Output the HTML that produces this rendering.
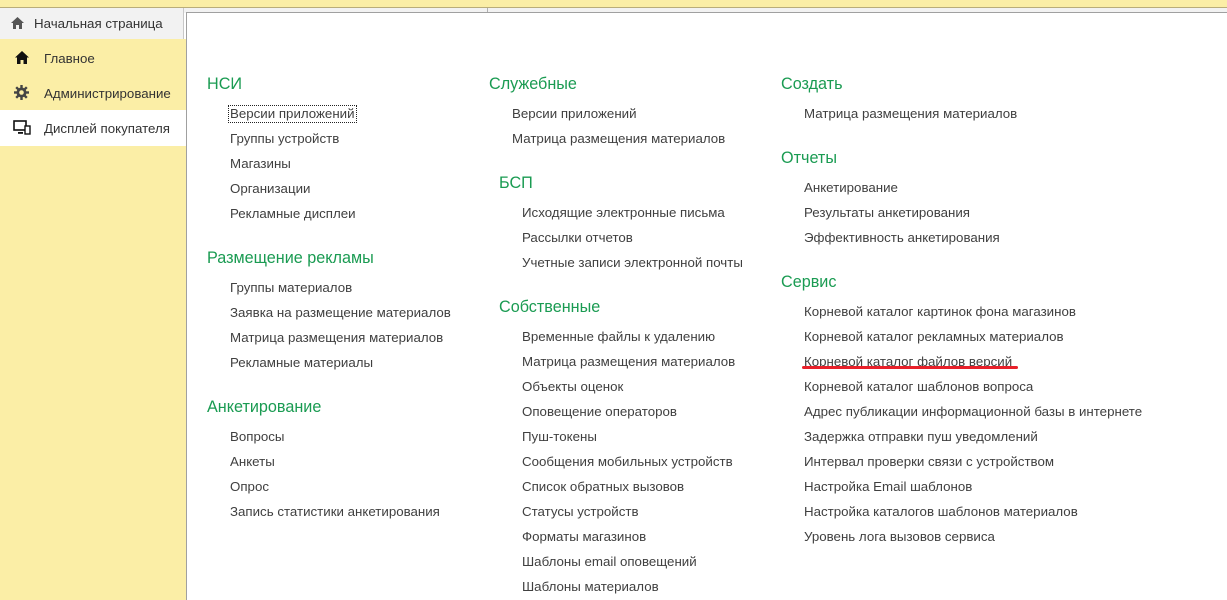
<!DOCTYPE html>
<html><head><meta charset="utf-8"><style>
*{margin:0;padding:0;box-sizing:border-box}
body{width:1227px;height:600px;overflow:hidden;position:relative;background:#fff;font-family:"Liberation Sans",Arial,sans-serif;font-size:13.3px;color:#404040}
.a{position:absolute;white-space:nowrap;line-height:16px;margin-top:1px}
.h{position:absolute;white-space:nowrap;font-size:16.2px;line-height:18px;color:#1a9b52;margin-top:1px}
</style></head><body>
<div style="position:absolute;left:0;top:0;width:1227px;height:8px;background:#fbeea6;border-bottom:1px solid #b9ad7a"></div>
<div style="position:absolute;left:0;top:8px;width:1227px;height:5px;background:#f2f2f2"></div>
<div style="position:absolute;left:487px;top:8px;width:1px;height:5px;background:#b0b0b0"></div>
<div style="position:absolute;left:0;top:8px;width:184px;height:31px;background:#f2f2f2;border-right:1px solid #c8c8c8"></div>
<svg style="position:absolute;left:10px;top:16px" width="15" height="14" viewBox="0 0 15 14"><path d="M7.5 1 L14 7 H12 V13 H9 V9 H6 V13 H3 V7 H1 Z" fill="#555"/></svg>
<div class="a" style="left:34px;top:15px;color:#333">Начальная страница</div>
<div style="position:absolute;left:0;top:39px;width:186px;height:561px;background:#fbeea6"></div>
<div style="position:absolute;left:0;top:110px;width:186px;height:36px;background:#fff"></div>
<svg style="position:absolute;left:15px;top:51px" width="14" height="13" viewBox="0 0 14 13"><path d="M7 0 L14 6.5 H12 V13 H8.5 V9 H5.5 V13 H2 V6.5 H0 Z" fill="#111"/></svg>
<div class="a" style="left:44px;top:50px;color:#333">Главное</div>
<svg style="position:absolute;left:14px;top:85px" width="15" height="15" viewBox="0 0 15 15"><g fill="#444"><circle cx="7.5" cy="7.5" r="5"/><rect x="6.3" y="0" width="2.4" height="15"/><rect x="0" y="6.3" width="15" height="2.4"/><rect x="6.3" y="0" width="2.4" height="15" transform="rotate(45 7.5 7.5)"/><rect x="6.3" y="0" width="2.4" height="15" transform="rotate(-45 7.5 7.5)"/></g><circle cx="7.5" cy="7.5" r="2.3" fill="#fbeea6"/></svg>
<div class="a" style="left:44px;top:85px;color:#333">Администрирование</div>
<svg style="position:absolute;left:13px;top:120px" width="18" height="15" viewBox="0 0 18 15"><rect x="1" y="1" width="12" height="9" fill="none" stroke="#111" stroke-width="1.6"/><rect x="5" y="12" width="5" height="1.8" fill="#111"/><rect x="12" y="6" width="5" height="8" fill="#fff" stroke="#111" stroke-width="1.4"/></svg>
<div class="a" style="left:44px;top:120px;color:#333">Дисплей покупателя</div>
<div style="position:absolute;left:186px;top:12px;width:1041px;height:588px;background:#fff;border-left:1px solid #a0a0a0;border-top:1px solid #a0a0a0"></div>

<div class="h" style="left:207px;top:74px">НСИ</div>
<div class="a" style="left:229px;top:105px;outline:1px dotted #222;padding:0 1px 0 1px">Версии приложений</div>
<div class="a" style="left:230px;top:130px">Группы устройств</div>
<div class="a" style="left:230px;top:155px">Магазины</div>
<div class="a" style="left:230px;top:180px">Организации</div>
<div class="a" style="left:230px;top:205px">Рекламные дисплеи</div>
<div class="h" style="left:207px;top:248px">Размещение рекламы</div>
<div class="a" style="left:230px;top:279px">Группы материалов</div>
<div class="a" style="left:230px;top:304px">Заявка на размещение материалов</div>
<div class="a" style="left:230px;top:329px">Матрица размещения материалов</div>
<div class="a" style="left:230px;top:354px">Рекламные материалы</div>
<div class="h" style="left:207px;top:397px">Анкетирование</div>
<div class="a" style="left:230px;top:428px">Вопросы</div>
<div class="a" style="left:230px;top:453px">Анкеты</div>
<div class="a" style="left:230px;top:478px">Опрос</div>
<div class="a" style="left:230px;top:503px">Запись статистики анкетирования</div>

<div class="h" style="left:489px;top:74px">Служебные</div>
<div class="a" style="left:512px;top:105px">Версии приложений</div>
<div class="a" style="left:512px;top:130px">Матрица размещения материалов</div>
<div class="h" style="left:499px;top:173px">БСП</div>
<div class="a" style="left:522px;top:204px">Исходящие электронные письма</div>
<div class="a" style="left:522px;top:229px">Рассылки отчетов</div>
<div class="a" style="left:522px;top:254px">Учетные записи электронной почты</div>
<div class="h" style="left:499px;top:297px">Собственные</div>
<div class="a" style="left:522px;top:328px">Временные файлы к удалению</div>
<div class="a" style="left:522px;top:353px">Матрица размещения материалов</div>
<div class="a" style="left:522px;top:378px">Объекты оценок</div>
<div class="a" style="left:522px;top:403px">Оповещение операторов</div>
<div class="a" style="left:522px;top:428px">Пуш-токены</div>
<div class="a" style="left:522px;top:453px">Сообщения мобильных устройств</div>
<div class="a" style="left:522px;top:478px">Список обратных вызовов</div>
<div class="a" style="left:522px;top:503px">Статусы устройств</div>
<div class="a" style="left:522px;top:528px">Форматы магазинов</div>
<div class="a" style="left:522px;top:553px">Шаблоны email оповещений</div>
<div class="a" style="left:522px;top:578px">Шаблоны материалов</div>

<div class="h" style="left:781px;top:74px">Создать</div>
<div class="a" style="left:804px;top:105px">Матрица размещения материалов</div>
<div class="h" style="left:781px;top:148px">Отчеты</div>
<div class="a" style="left:804px;top:179px">Анкетирование</div>
<div class="a" style="left:804px;top:204px">Результаты анкетирования</div>
<div class="a" style="left:804px;top:229px">Эффективность анкетирования</div>
<div class="h" style="left:781px;top:272px">Сервис</div>
<div class="a" style="left:804px;top:303px">Корневой каталог картинок фона магазинов</div>
<div class="a" style="left:804px;top:328px">Корневой каталог рекламных материалов</div>
<div class="a" style="left:804px;top:353px;text-decoration:underline">Корневой каталог файлов версий</div>
<div style="position:absolute;left:802px;top:366px;width:216px;height:3px;background:#e8202a;border-radius:2px"></div>
<div class="a" style="left:804px;top:378px">Корневой каталог шаблонов вопроса</div>
<div class="a" style="left:804px;top:403px">Адрес публикации информационной базы в интернете</div>
<div class="a" style="left:804px;top:428px">Задержка отправки пуш уведомлений</div>
<div class="a" style="left:804px;top:453px">Интервал проверки связи с устройством</div>
<div class="a" style="left:804px;top:478px">Настройка Email шаблонов</div>
<div class="a" style="left:804px;top:503px">Настройка каталогов шаблонов материалов</div>
<div class="a" style="left:804px;top:528px">Уровень лога вызовов сервиса</div>
</body></html>
